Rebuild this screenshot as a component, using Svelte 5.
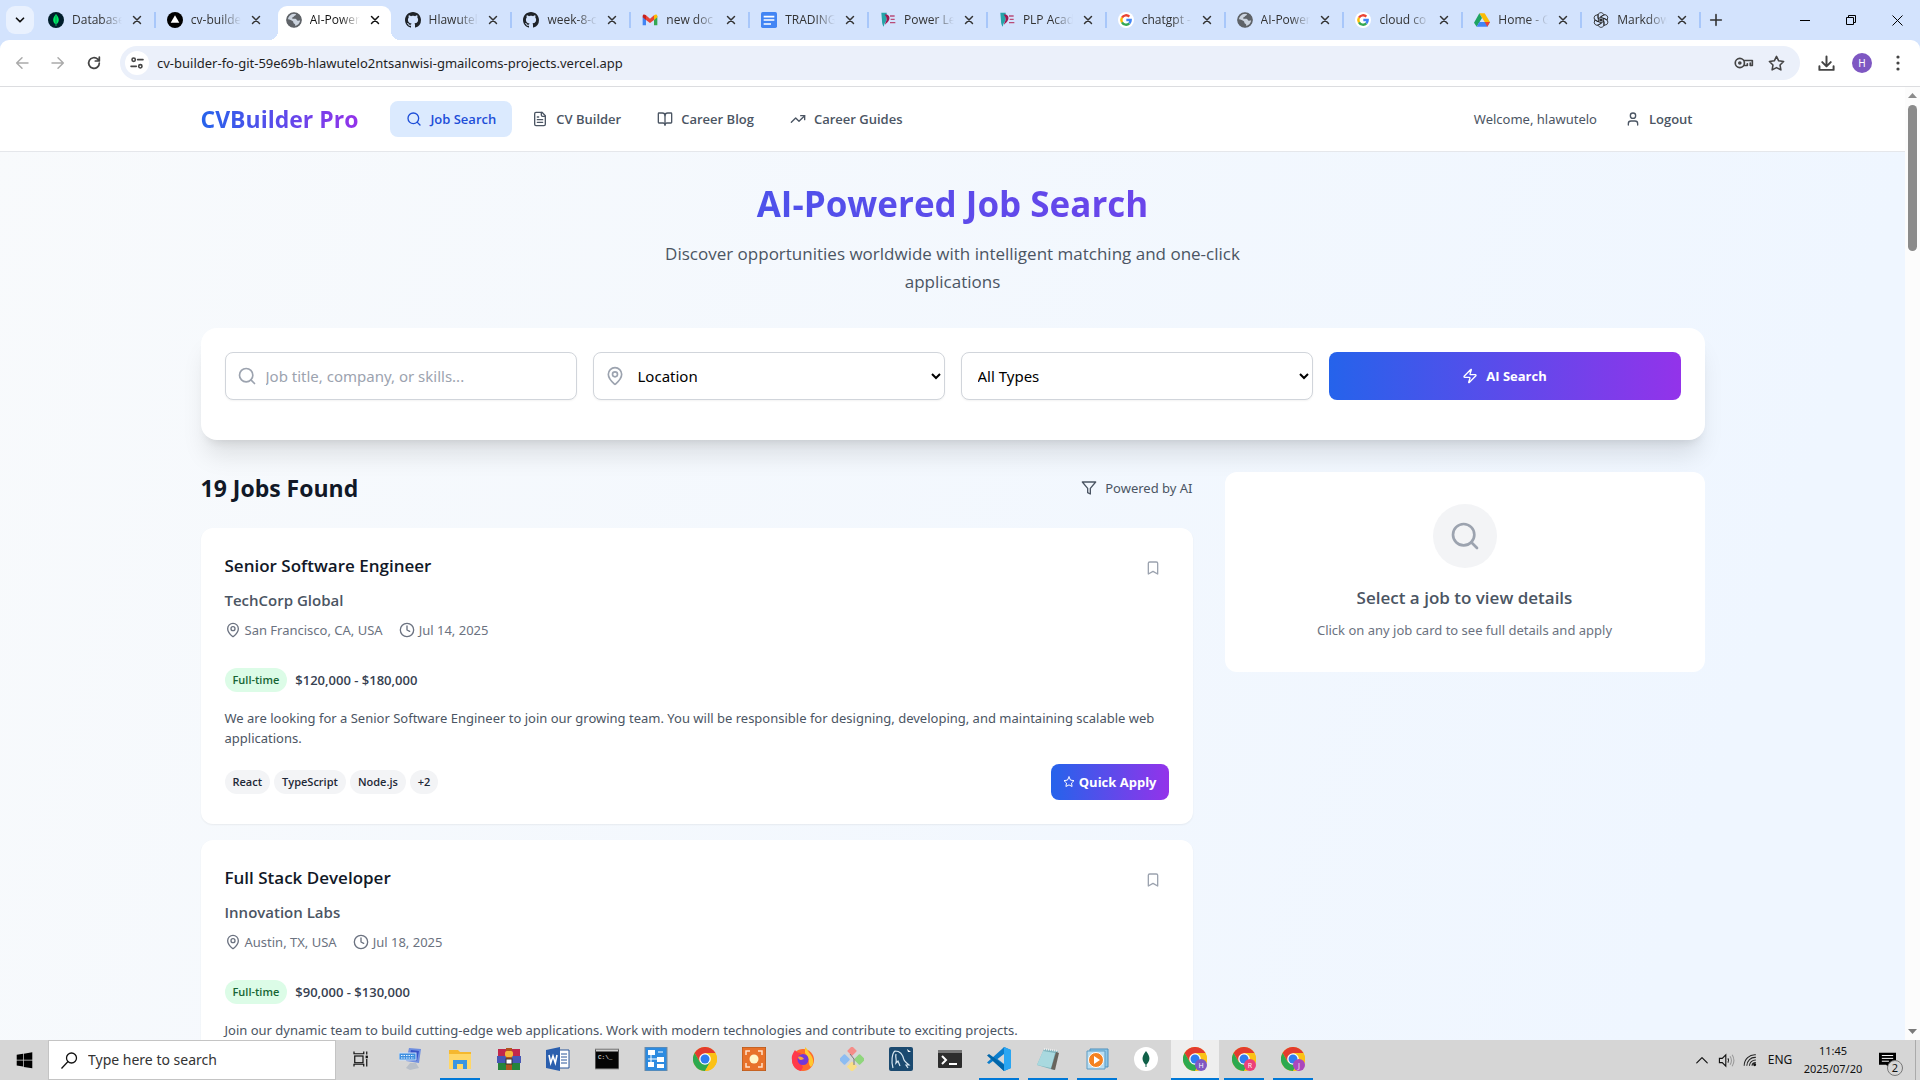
<script>
  const paths = {
    search: '<circle cx="11" cy="11" r="8"/><path d="m21 21-4.3-4.3"/>',
    file: '<path d="M15 2H6a2 2 0 0 0-2 2v16a2 2 0 0 0 2 2h12a2 2 0 0 0 2-2V7Z"/><path d="M14 2v4a2 2 0 0 0 2 2h4"/><path d="M10 9H8"/><path d="M16 13H8"/><path d="M16 17H8"/>',
    book: '<path d="M12 7v14"/><path d="M3 18a1 1 0 0 1-1-1V4a1 1 0 0 1 1-1h5a4 4 0 0 1 4 4 4 4 0 0 1 4-4h5a1 1 0 0 1 1 1v13a1 1 0 0 1-1 1h-6a3 3 0 0 0-3 3 3 3 0 0 0-3-3z"/>',
    trend: '<path d="M22 7 13.5 15.5 8.5 10.5 2 17"/><path d="M16 7h6v6"/>',
    user: '<path d="M19 21v-2a4 4 0 0 0-4-4H9a4 4 0 0 0-4 4v2"/><circle cx="12" cy="7" r="4"/>',
    pin: '<path d="M20 10c0 4.993-5.539 10.193-7.399 11.799a1 1 0 0 1-1.202 0C9.539 20.193 4 14.993 4 10a8 8 0 0 1 16 0"/><circle cx="12" cy="10" r="3"/>',
    clock: '<circle cx="12" cy="12" r="10"/><path d="M12 6v6l4 2"/>',
    zap: '<path d="M4 14a1 1 0 0 1-.78-1.63l9.9-10.2a.5.5 0 0 1 .86.46l-1.92 6.02A1 1 0 0 0 13 10h7a1 1 0 0 1 .78 1.63l-9.9 10.2a.5.5 0 0 1-.86-.46l1.92-6.02A1 1 0 0 0 11 14z"/>',
    filter: '<path d="M22 3H2l8 9.46V19l4 2v-8.54L22 3z"/>',
    bookmark: '<path d="m19 21-7-4-7 4V5a2 2 0 0 1 2-2h10a2 2 0 0 1 2 2v16z"/>',
    star: '<path d="M12 2l3.09 6.26L22 9.27l-5 4.87 1.18 6.88L12 17.77l-6.18 3.25L7 14.14 2 9.27l6.91-1.01L12 2z"/>',
    close: '<path d="M6 6l12 12M18 6 6 18"/>',
    chevron: '<path d="m6 9 6 6 6-6"/>',
    back: '<path d="M21 12H4M12 4l-8 8 8 8"/>',
    forward: '<path d="M3 12h17M12 4l8 8-8 8"/>',
    reload: '<path d="M20 12a8 8 0 1 1-2.5-5.8L20 8.500M20 3v6h-6"/>',
    tune: '<circle cx="7" cy="7" r="2.500"/><path d="M13 7h8M3 17h8"/><circle cx="17" cy="17" r="2.500"/>',
    key: '<circle cx="7" cy="12" r="5.500"/><circle cx="7" cy="12" r="1.200"/><path d="M12 9h10v6h-2.500v-3M12 15h4v-2"/>',
    download: '<path d="M12 2v14M6 10l6 6 6-6M2 16v5h20v-5"/>',
    plus: '<path d="M12 4v16M4 12h16"/>',
    up: '<path d="m3 17 9-9 9 9"/>'
  };

  const chromeArt = '<circle cx="12" cy="12" r="12" fill="#fbc116"/><path d="M1.600 6A12 12 0 0 1 22.400 6H12L6.800 15Z" fill="#e33b2e"/><path d="M1.600 6A12 12 0 0 0 12 24l5.200-9-5.200-3-5.200 3Z" fill="#2da94f"/><path d="M22.400 6H12v6l5.200 3L12 24A12 12 0 0 0 22.400 6Z" fill="#fbc116"/><circle cx="12" cy="12" r="5.800" fill="#fff"/><circle cx="12" cy="12" r="4.500" fill="#2f7cf0"/>';
  const badge = (letter, fill) => `${chromeArt}<circle cx="18" cy="18" r="6" fill="${fill}"/><text x="18" y="20.500" text-anchor="middle" font-size="7" fill="#fff" font-family="Open Sans, sans-serif">${letter}</text>`;

  const github = '<path fill="#1f2328" transform="scale(1.5)" d="M8 0C3.580 0 0 3.580 0 8c0 3.540 2.290 6.530 5.470 7.590.4.070.55-.17.55-.38 0-.19-.01-.82-.01-1.490-2.010.37-2.530-.49-2.690-.94-.09-.23-.48-.94-.82-1.130-.28-.15-.68-.52-.01-.53.63-.01 1.080.58 1.230.82.72 1.210 1.870.87 2.330.66.07-.52.28-.87.51-1.070-1.780-.2-3.640-.89-3.640-3.950 0-.87.31-1.590.82-2.150-.08-.2-.36-1.020.08-2.120 0 0 .67-.21 2.200.82.64-.18 1.320-.27 2-.27s1.360.09 2 .27c1.530-1.040 2.200-.82 2.200-.82.44 1.100.16 1.920.08 2.120.51.56.82 1.270.82 2.150 0 3.070-1.870 3.750-3.650 3.950.29.25.54.73.54 1.480 0 1.070-.01 1.930-.01 2.200 0 .21.15.46.55.38A8.010 8.010 0 0 0 16 8c0-4.420-3.580-8-8-8Z"/>';
  const globe = '<circle cx="12" cy="12" r="11" fill="#5f6368"/><path d="M14 2c2 1 1 3-1 3.500-1 .3-1 1.500-2 2-1.500.6-2 1-1.500 2.500H14c2 0 2 3 4 3s3-1 4.500-.5A11 11 0 0 1 14 22c-1-1 .5-2-.5-3.500-1-1-2.500-1-2.500-3s-2-2.500-4-3.500-4-1.500-5.500-.5C2 7 5 3 9 2c1 1 3-.5 5 0Z" fill="#dfe7f5" opacity=".85"/><circle cx="12" cy="12" r="10.500" fill="none" stroke="#5f6368" stroke-width="2.500"/>';
  const google = '<circle cx="12" cy="12" r="12" fill="#fff"/><g fill="none" stroke-width="3.600"><path d="M6 8.500A7 7 0 0 1 17 7" stroke="#ea4335"/><path d="M6 15.500a7 7 0 0 1 0-7" stroke="#fbbc04"/><path d="M17 17a7 7 0 0 1-11-1.500" stroke="#34a853"/><path d="M12.500 12H19a7 7 0 0 1-2 5" stroke="#4285f4"/></g>';
  const plp = '<path d="M2 1h8v9c0 5-4 6-4 12C4 20 3 17 3 13Z" fill="#25a4a8"/><path d="M7 4c6-1 8 3 7 7s-5 6-6 8c-1-3 2-5 2-8S9 6 7 4Z" fill="#a01850"/><path d="M15 6h7M16 11h6M15 16h8" stroke="#b94c78" stroke-width="2"/>';
  const knot = [0, 60, 120, 180, 240, 300]
    .map((turn) => `<path transform="rotate(${turn} 12 12)" d="M12 7.500 7.500 10V5.500A4.300 4.300 0 0 1 15.500 3l1.500 1-5 3v6"/>`)
    .join('');

  const art = {
    mongo: '<circle cx="12" cy="12" r="12" fill="#001e2b"/><path d="M12 3c6 7 5 12 .5 15.500V21h-1v-2.500C7 15 6 10 12 3Z" fill="#00ed64"/><path d="M12 5v14" stroke="#00684a" stroke-width="1"/>',
    vercel: '<circle cx="12" cy="12" r="12" fill="#000"/><path d="m12 5 6.500 11h-13Z" fill="#fff"/>',
    globe, github, google, plp,
    gmail: '<path d="M1 5v15h5V11L1 7Z" fill="#4285f4"/><path d="M18 11v9h5V6Z" fill="#34a853"/><path d="M18 5v7l5-4V6c0-3-3-3-5-1Z" fill="#fbbc04"/><path d="M6 5v7l6 4.500 6-4.500V5l-6 5Z" fill="#ea4335"/><path d="M1 6v2l5 4V5C4 3 1 3 1 6Z" fill="#c5221f"/>',
    docs: '<rect width="24" height="24" rx="2.500" fill="#4285f4"/><path d="M4 7h16M4 12h16M4 18h11" stroke="#fff" stroke-width="2.500"/>',
    drive: '<path d="M8 2h8l8 13h-8Z" fill="#fbbc04"/><path d="M8 2 0 16l4 6 8-13Z" fill="#1ea362"/><path d="M4 22h16l4-7H8Z" fill="#4285f4"/><path d="m16 15 8 0-4 7Z" fill="#ea4335"/>',
    openai: `<g fill="none" stroke="#222" stroke-width="1.200">${knot}</g>`,
    taskview: '<g fill="none" stroke="#111" stroke-width="1.600"><rect x="5" y="8" width="11" height="9"/><path d="M4 2v3h13V2M4 22v-3h13v3M21 2v4M21 12v10"/></g><rect x="19.500" y="7.500" width="3" height="3.500" fill="#111"/>',
    system: '<path d="m10 1 12 1-2 14-13-2Z" fill="#6f8fe0"/><path d="m12 3 8 1-2 10-8-1Z" fill="#3553c8"/><rect y="6" width="17" height="7" fill="#3d8fe0" stroke="#cfe2f7"/><path d="M2 8.500h13M2 11h13" stroke="#e9f4ff" stroke-dasharray="1.500 1"/><path d="M11 16h6l3 5-9 2-4-2Z" fill="#b8bfc9"/>',
    explorer: '<path d="M1 3h9l2 2h11v17H1Z" fill="#f5b82e"/><path d="M1 7h22v15H1Z" fill="#ffd767"/><path d="M5 22v-9h14v9h-4v-5H9v5Z" fill="#3a95e0"/>',
    winrar: '<path d="M1 2h22v7H1Z" fill="#c2274b"/><path d="M0 9h24v7H0Z" fill="#4657b5"/><path d="M1 16h22v7H1Z" fill="#26843a"/><path d="M9 1h6v22H9Z" fill="#b3541e"/><rect x="8" y="4" width="8" height="6" rx="2" fill="#f4b63a"/><rect x="9" y="12" width="6" height="5" fill="#fff" stroke="#333"/>',
    word: '<path d="M12 3h11v18H12Z" fill="#fff" stroke="#2b579a"/><path d="M15 7h6M15 10h6M15 13h6M15 16h6" stroke="#2b579a"/><path d="m0 3 14-3v24L0 21Z" fill="#2b5fae"/><path d="m3 8 1.700 8L7 9l2.300 7L11 8" fill="none" stroke="#fff" stroke-width="1.600"/>',
    cmd: '<rect y="2" width="24" height="20" fill="#050505" stroke="#999"/><rect x="1" y="2.500" width="22" height="2" fill="#ccc"/><text x="3" y="12" fill="#fff" font-size="6" font-family="Liberation Mono, monospace">C:\\_</text>',
    flow: '<rect x="1" y="0" width="22" height="24" fill="#2d8be0" stroke="#7a8a99"/><g fill="#fff"><rect x="4" y="3" width="7" height="5"/><rect x="4" y="15" width="6" height="5"/><rect x="13" y="10" width="7" height="5"/><rect x="13" y="17" width="7" height="4"/></g><path d="M7 8v7M4 12h9M14 5h5" stroke="#fff"/>',
    chrome: chromeArt,
    capture: '<rect width="24" height="24" fill="#e8722a" stroke="#a4551d"/><circle cx="12" cy="12" r="4.500" fill="#fff6c8"/><path d="M4 8V4h4M16 4h4v4M20 16v4h-4M8 20H4v-4" fill="none" stroke="#ffe1c9" stroke-width="1.500"/>',
    firefox: '<circle cx="12" cy="13" r="11" fill="#ff6a2a"/><path d="M14 0c3 2 3 5 6 8 3 5 3 9 0 12-4-3 0-8-6-14Z" fill="#ffc830"/><path d="M1 13C0 8 3 5 4 3c1 2 3 3 6 3l-3 6 5 8-2 4C5 23 1 19 1 13Z" fill="#ff3a4a"/><circle cx="12" cy="12.500" r="5.500" fill="#7437d8"/><path d="M7 10c2-1 5 0 6 2-2 1-5 2-6-2Z" fill="#ffa436"/>',
    gitbash: '<rect x="8.500" y="0.500" width="7" height="7" rx="1" transform="rotate(45 12 4)" fill="#f58d88"/><rect x="0.500" y="8.500" width="8" height="8" rx="1" transform="rotate(45 4.500 12.500)" fill="#8cbcf2"/><rect x="15.500" y="8.500" width="8" height="8" rx="1" transform="rotate(45 19.500 12.500)" fill="#8fd67c"/><rect x="8" y="16" width="7.500" height="7.500" rx="1" transform="rotate(45 12 20)" fill="#f9df88"/><path d="m10 7 4 5v6" stroke="#777" fill="none"/>',
    mysql: '<rect width="24" height="24" rx="2" fill="#1b4a70"/><path d="M4 21C2 15 3 6 6 4c5 0 8 4 9 9 1 2 3 3 5 5l-3 0 2 3M7 7c-1 4 1 5 0 9l2-2 2 5" fill="none" stroke="#d9e8f2" stroke-width="1.200"/><path d="m18 2 4 3-3 0" fill="#fff"/>',
    terminal: '<rect y="3" width="24" height="18" rx="1" fill="#2d2d2d"/><path d="M0 3h24v3H0Z" fill="#777"/><path d="m4 9 4 4-4 4M11 17h8" fill="none" stroke="#fff" stroke-width="2"/>',
    vscode: '<path d="m17 0 7 3v18l-7 3L6 14l-4 3-2-1.500L15 2Z" fill="#0b7dcc"/><path d="m17 0 7 3v18l-7 3Z" fill="#2aa6f2"/><path d="M0 8.500 2 7l15 11v6L6 14Z" fill="#0065a9"/><path d="m17 7-6.500 5 6.500 5Z" fill="#d6d6d6"/>',
    notepad: '<path d="m8 2 14 2-4 19L1 18Z" fill="#7eb4bd"/><path d="m7 4 12 2-4 15L1 18Z" fill="#a9d9df"/><path d="m20 5 3 1-4 17-4-1Z" fill="#68645c"/><path d="m8 2 14 2" stroke="#eee" stroke-width="2" stroke-dasharray="1 1"/>',
    media: '<path d="M5 2h18v18H5Z" fill="#8cc6e8" stroke="#4f91bd"/><path d="M2 4h18v18H2Z" fill="#b9def2" stroke="#5e9cc3"/><circle cx="11" cy="13" r="7.500" fill="#f58220" stroke="#fff"/><path d="m9 9 6 4-6 4Z" fill="#fff"/>',
    compass: '<circle cx="12" cy="12" r="12" fill="#fff"/><path d="M12 4c5 6 4 10 .5 13.500V20h-1v-2.500C8 14 7 10 12 4Z" fill="#116149"/>',
    chromeH: badge('H', '#7e57c2'),
    chromeR: badge('R', '#ec407a'),
    chromeJ: badge('J', '#ab47bc'),
    windows: '<path d="m1 4 9-1.500V11H1ZM11 2.300 23 .5V11H11ZM1 12h9v8.500L1 19.200ZM11 12h12v11l-12-1.800Z" fill="#000"/>',
    volume: '<path d="M2 9h4l5-5v16l-5-5H2Z" fill="none" stroke="#111" stroke-width="1.600"/><path d="M14 9q2 3 0 6" fill="none" stroke="#111" stroke-width="1.500"/><path d="M17 6q4 6 0 12M20 4q5 8 0 16" fill="none" stroke="#999" stroke-width="1.500"/>',
    wifi: '<g fill="none" stroke="#222" stroke-width="1.800"><path d="M2 22C2 11 11 2 22 3"/><path d="M6.500 22C7 13 13 7 22 7.500"/><path d="M11 22c0-6 5-10 11-10"/><path d="M15.500 22c0-4 3-5.500 6.500-5.500"/></g><circle cx="20" cy="20" r="2.500" fill="#111"/>',
    note: '<path d="M0 1h24v17h-8v6l-6-6H0Z" fill="#000"/><path d="M4 5h16M4 9h16M4 13h10" stroke="#fff" stroke-width="1.400"/>'
  };

  const tabs = [
    ['mongo', 'Database'], ['vercel', 'cv-builde'], ['globe', 'AI-Power'], ['github', 'Hlawutel'],
    ['github', 'week-8-c'], ['gmail', 'new doc'], ['docs', 'TRADING'], ['plp', 'Power Le'],
    ['plp', 'PLP Acad'], ['google', 'chatgpt -'], ['globe', 'AI-Power'], ['google', 'cloud co'],
    ['drive', 'Home - G'], ['openai', 'Markdow']
  ];
  const activeTab = 2;

  const nav = [
    ['search', 'Job Search'], ['file', 'CV Builder'], ['book', 'Career Blog'], ['trend', 'Career Guides']
  ];

  const jobs = [
    {
      title: 'Senior Software Engineer', company: 'TechCorp Global', place: 'San Francisco, CA, USA', date: 'Jul 14, 2025',
      type: 'Full-time', salary: '$120,000 - $180,000',
      text: 'We are looking for a Senior Software Engineer to join our growing team. You will be responsible for designing, developing, and maintaining scalable web applications.',
      tags: ['React', 'TypeScript', 'Node.js', '+2']
    },
    {
      title: 'Full Stack Developer', company: 'Innovation Labs', place: 'Austin, TX, USA', date: 'Jul 18, 2025',
      type: 'Full-time', salary: '$90,000 - $130,000',
      text: 'Join our dynamic team to build cutting-edge web applications. Work with modern technologies and contribute to exciting projects.',
      tags: []
    }
  ];

  const apps = [
    ['taskview', ''], ['system', ''], ['explorer', 'open'], ['winrar', ''], ['word', ''], ['cmd', ''], ['flow', ''],
    ['chrome', ''], ['capture', ''], ['firefox', ''], ['gitbash', ''], ['mysql', ''], ['terminal', ''],
    ['vscode', 'open'], ['notepad', 'open'], ['media', 'open'], ['compass', ''], ['chromeH', 'open current'],
    ['chromeR', 'open'], ['chromeJ', 'open']
  ];
</script>

{#snippet icon(name, size, weight = 2)}
  <svg width={size} height={size} viewBox="0 0 24 24" fill="none" stroke="currentColor" stroke-width={weight} stroke-linecap="round" stroke-linejoin="round" aria-hidden="true">{@html paths[name]}</svg>
{/snippet}

{#snippet picture(name, size)}
  <svg width={size} height={size} viewBox="0 0 24 24" aria-hidden="true">{@html art[name]}</svg>
{/snippet}

<div class="screen">
  <div class="tabstrip">
    <button class="tabsearch" aria-label="Search tabs">{@render icon('chevron', 14, 3)}</button>
    <div class="tabs">
      {#each tabs as [kind, label], i}
        <div class="tab" class:active={i === activeTab} class:divided={i !== activeTab && i !== activeTab - 1}>
          {@render picture(kind, 16)}
          <span class="tabname">{label}</span>
          <button aria-label="Close tab">{@render icon('close', 14, 2.5)}</button>
        </div>
      {/each}
    </div>
    <button class="newtab" aria-label="New tab">{@render icon('plus', 16, 2.4)}</button>
    <div class="winbuttons">
      <button aria-label="Minimize"><svg width="10" height="10" viewBox="0 0 10 10"><path d="M0 5.500h10" stroke="#000" /></svg></button>
      <button aria-label="Restore"><svg width="10" height="10" viewBox="0 0 10 10" fill="none" stroke="#000"><path d="M.5 2.500h7v7h-7zM2.500 2V.5h7v7H8" /></svg></button>
      <button aria-label="Close"><svg width="11" height="11" viewBox="0 0 11 11"><path d="m.5.5 10 10m0-10-10 10" stroke="#000" /></svg></button>
    </div>
  </div>

  <div class="toolbar">
    <div class="history">
      <button class="dim" aria-label="Back">{@render icon('back', 16, 2.2)}</button>
      <button class="dim" aria-label="Forward">{@render icon('forward', 16, 2.2)}</button>
      <button aria-label="Reload">{@render icon('reload', 16, 2.6)}</button>
    </div>
    <div class="omnibox">
      <button class="site" aria-label="Site information">{@render icon('tune', 16, 2.4)}</button>
      <input aria-label="Address" value="cv-builder-fo-git-59e69b-hlawutelo2ntsanwisi-gmailcoms-projects.vercel.app" />
      <button aria-label="Passwords">{@render icon('key', 20, 2)}</button>
      <button aria-label="Bookmark page">{@render icon('star', 17, 2.2)}</button>
    </div>
    <div class="tools">
      <button aria-label="Downloads">{@render icon('download', 17, 2.8)}</button>
      <button aria-label="Profile"><span class="avatar">H</span></button>
      <button aria-label="Menu"><svg width="4" height="16" viewBox="0 0 4 16" fill="#444"><circle cx="2" cy="2" r="1.600" /><circle cx="2" cy="8" r="1.600" /><circle cx="2" cy="14" r="1.600" /></svg></button>
    </div>
  </div>

  <div class="viewport">
    <div class="page">
      <header>
        <div class="wrap headrow">
          <a class="logo" href="#home">CVBuilder Pro</a>
          <nav>
            {#each nav as [glyph, label], i}
              <a href="#{glyph}" class:selected={i === 0}>{@render icon(glyph, 16)}{label}</a>
            {/each}
          </nav>
          <div class="account">
            <span>Welcome, hlawutelo</span>
            <button>{@render icon('user', 16)}Logout</button>
          </div>
        </div>
      </header>

      <main class="wrap">
        <div class="hero">
          <h1>AI-Powered Job Search</h1>
          <p>Discover opportunities worldwide with intelligent matching and one-click applications</p>
        </div>

        <form class="searchcard">
          <label class="field">
            <span class="lead">{@render icon('search', 20)}</span>
            <input type="text" aria-label="Keywords" placeholder="Job title, company, or skills..." />
          </label>
          <label class="field">
            <span class="lead">{@render icon('pin', 20)}</span>
            <select aria-label="Location"><option>Location</option></select>
          </label>
          <label class="field">
            <select class="plain" aria-label="Job type"><option>All Types</option></select>
          </label>
          <button type="button" class="gradient go">{@render icon('zap', 16)}AI Search</button>
        </form>

        <div class="columns">
          <section class="results">
            <div class="resulthead">
              <h2>19 Jobs Found</h2>
              <span>{@render icon('filter', 16)}Powered by AI</span>
            </div>
            {#each jobs as job}
              <article class="job">
                <div class="jobtop">
                  <div>
                    <h3>{job.title}</h3>
                    <p class="company">{job.company}</p>
                    <div class="meta">
                      <span>{@render icon('pin', 16)}{job.place}</span>
                      <span>{@render icon('clock', 16)}{job.date}</span>
                    </div>
                  </div>
                  <button class="save" aria-label="Save job">{@render icon('bookmark', 16)}</button>
                </div>
                <div class="pay"><span class="type">{job.type}</span><span>{job.salary}</span></div>
                <p class="about">{job.text}</p>
                <div class="jobfoot">
                  <div class="tags">{#each job.tags as tag}<span>{tag}</span>{/each}</div>
                  <button class="gradient apply">{@render icon('star', 12)}Quick Apply</button>
                </div>
              </article>
            {/each}
          </section>

          <aside class="details">
            <div class="disc">{@render icon('search', 32)}</div>
            <h3>Select a job to view details</h3>
            <p>Click on any job card to see full details and apply</p>
          </aside>
        </div>
      </main>
    </div>
    <div class="scrollbar" aria-hidden="true">
      <svg width="9" height="5" viewBox="0 0 9 5"><path d="M4.500 0 9 5H0Z" fill="#8b8b8b" /></svg>
      <div class="track"><div class="thumb"></div></div>
      <svg width="9" height="5" viewBox="0 0 9 5"><path d="M4.500 5 9 0H0Z" fill="#7a7a7a" /></svg>
    </div>
  </div>

  <div class="taskbar">
    <button class="start" aria-label="Start">{@render picture('windows', 17)}</button>
    <label class="finder">
      <svg width="17" height="17" viewBox="0 0 17 17" fill="none" stroke="#111" stroke-width="1.300" aria-hidden="true"><circle cx="10.500" cy="6" r="5" /><path d="M7 9.500.5 16.500" /></svg>
      <input type="text" aria-label="Search" placeholder="Type here to search" />
    </label>
    <div class="apps">
      {#each apps as [name, status]}
        <button class={status} aria-label={name}>{@render picture(name, name === 'taskview' ? 18 : 24)}</button>
      {/each}
    </div>
    <div class="tray">
      <button aria-label="Show hidden icons">{@render icon('up', 14, 2)}</button>
      <button aria-label="Volume">{@render picture('volume', 17)}</button>
      <button aria-label="Network">{@render picture('wifi', 14)}</button>
      <span class="lang">ENG</span>
      <div class="clock"><span>11:45</span><span>2025/07/20</span></div>
      <button class="notes" aria-label="Notifications">{@render picture('note', 17)}<span class="count">2</span></button>
    </div>
  </div>
</div>

<style>
  :global(body) {
    margin: 0;
    overflow: hidden;
  }
  .screen,
  .screen :global(*) {
    box-sizing: border-box;
  }
  .screen {
    display: flex;
    flex-direction: column;
    height: 100vh;
    font-family: 'Noto Sans', 'Open Sans', sans-serif;
    font-size: 13px;
    line-height: 20px;
    color: #4b5563;
    background: #d3e3fd;
    overflow: hidden;
  }
  button,
  input,
  select {
    font: inherit;
    color: inherit;
    border: 0;
    background: none;
    padding: 0;
    margin: 0;
    outline: 0;
  }
  button {
    display: flex;
    align-items: center;
    justify-content: center;
  }
  svg {
    display: block;
    flex: none;
  }
  h1, h2, h3, p {
    margin: 0;
  }
  a {
    text-decoration: none;
    color: inherit;
  }
  h1, h2, h3, nav, .logo, .company, .account button, .pay, .tags, .gradient, .hero p, .tabs {
    font-family: 'Open Sans', 'Noto Sans', sans-serif;
  }

  .tabstrip {
    display: flex;
    flex: none;
    height: 40px;
    padding-left: 6px;
    color: #333;
  }
  .tabsearch {
    width: 28px;
    height: 28px;
    margin-top: 6px;
    border-radius: 9px;
    background: #e9f1fe;
    color: #111;
  }
  .tabs {
    display: flex;
    flex: 0 1 1664px;
    min-width: 0;
    margin-left: 3px;
  }
  .tab {
    position: relative;
    display: flex;
    align-items: center;
    flex: 1 1 0;
    min-width: 0;
    gap: 8px;
    padding: 0 12px 0 11px;
    font-size: 12px;
  }
  .tab.divided::after {
    content: '';
    position: absolute;
    right: 0;
    top: 12px;
    width: 2px;
    height: 16px;
    background: #a8c7fa;
  }
  .tabname {
    flex: 1;
    min-width: 0;
    overflow: hidden;
    white-space: nowrap;
    mask-image: linear-gradient(90deg, #000 60%, transparent);
  }
  .tab.active {
    z-index: 0;
    color: #111;
  }
  .tab.active::before {
    content: '';
    position: absolute;
    z-index: -1;
    inset: 6px 3px 0;
    border-radius: 9px 9px 0 0;
    background: #fff;
  }
  .tab.active::after {
    content: '';
    position: absolute;
    z-index: -1;
    inset: auto -6px 0;
    height: 9px;
    background:
      radial-gradient(circle at 0 0, transparent 9px, #fff 9px) left / 9px 9px no-repeat,
      radial-gradient(circle at 100% 0, transparent 9px, #fff 9px) right / 9px 9px no-repeat;
  }
  .newtab {
    width: 30px;
  }
  .winbuttons {
    display: flex;
    margin-left: auto;
  }
  .winbuttons button {
    width: 46px;
  }

  .toolbar {
    display: flex;
    align-items: center;
    flex: none;
    height: 47px;
    padding: 0 4px;
    border-bottom: 1px solid #dcdde0;
    border-radius: 9px 9px 0 0;
    background: #fff;
    color: #444;
  }
  .history {
    display: flex;
  }
  .history button {
    width: 36px;
    height: 34px;
  }
  .history .dim {
    color: #aaa;
  }
  .omnibox {
    display: flex;
    align-items: center;
    flex: 1;
    height: 34px;
    margin-left: 8px;
    padding: 0 8px 0 5px;
    border-radius: 17px;
    background: #ebf0fa;
  }
  .omnibox button {
    width: 32px;
  }
  .omnibox .site {
    width: 24px;
    height: 24px;
    border-radius: 50%;
    background: #fff;
  }
  .omnibox input {
    flex: 1;
    min-width: 0;
    margin-left: 8px;
    color: #1f1f1f;
  }
  .tools {
    display: flex;
    margin-left: 8px;
  }
  .tools button {
    width: 36px;
  }
  .avatar {
    width: 20px;
    height: 20px;
    border-radius: 50%;
    background: #7e57c2;
    color: #fff;
    font-size: 10px;
  }

  .viewport {
    display: flex;
    flex: 1;
    min-height: 0;
  }
  .page {
    flex: 1;
    min-width: 0;
    overflow: hidden;
    background: linear-gradient(107deg, #f8fafc, #eff6ff 88%);
  }
  .scrollbar {
    display: flex;
    flex-direction: column;
    align-items: center;
    width: 15px;
    padding: 6px 0;
    background: #fcfcfc;
  }
  .track {
    flex: 1;
    padding-top: 7px;
  }
  .thumb {
    width: 9px;
    height: 146px;
    border-radius: 5px;
    background: #8b8b8b;
  }
  .wrap {
    max-width: 1536px;
    margin: 0 auto;
    padding: 0 16px;
  }
  header {
    background: #fff;
    border-bottom: 1px solid #e5e7eb;
  }
  .headrow {
    display: flex;
    align-items: center;
    height: 64px;
  }
  .logo {
    font-size: 23px;
    line-height: 32px;
    font-weight: 700;
    background: linear-gradient(90deg, #2563eb, #9333ea);
    background-clip: text;
    color: transparent;
  }
  nav {
    display: flex;
    gap: 4px;
    margin-left: 32px;
    font-weight: 600;
  }
  nav a {
    display: flex;
    align-items: center;
    gap: 8px;
    height: 36px;
    padding: 0 16px;
    border-radius: 8px;
  }
  nav .selected {
    background: #dbeafe;
    color: #1d4ed8;
  }
  .account {
    display: flex;
    align-items: center;
    gap: 16px;
    margin-left: auto;
  }
  .account button {
    gap: 8px;
    height: 36px;
    padding: 0 12px;
    font-family: 'Open Sans', 'Noto Sans', sans-serif;
    font-weight: 600;
  }
  main.wrap {
    padding-top: 32px;
  }
  .hero {
    text-align: center;
  }
  h1 {
    font-size: 35px;
    line-height: 40px;
    font-weight: 700;
    background: linear-gradient(90deg, #2563eb, #9333ea);
    background-clip: text;
    color: transparent;
  }
  .hero p {
    max-width: 672px;
    margin: 16px auto 0;
    font-size: 17px;
    line-height: 28px;
  }
  .searchcard {
    display: grid;
    grid-template-columns: repeat(4, 1fr);
    gap: 16px;
    margin-top: 32px;
    padding: 24px 24px 40px;
    border-radius: 16px;
    background: #fff;
    box-shadow: 0 20px 25px -5px rgb(0 0 0 / 10%), 0 8px 10px -6px rgb(0 0 0 / 10%);
  }
  .field {
    position: relative;
    display: block;
    height: 48px;
    color: #000;
    font-size: 15px;
  }
  .field input,
  .field select {
    width: 100%;
    height: 48px;
    padding: 0 0 0 40px;
    border: 1px solid #d1d5db;
    border-radius: 8px;
    background: #fff;
    box-shadow: 0 1px 2px rgb(0 0 0 / 5%);
  }
  .field .plain {
    padding-left: 12px;
  }
  .field input::placeholder {
    color: #9ca3af;
  }
  .lead {
    position: absolute;
    left: 12px;
    top: 14px;
    color: #9ca3af;
  }
  .gradient {
    gap: 8px;
    border-radius: 8px;
    background: linear-gradient(90deg, #2563eb, #9333ea);
    color: #fff;
    font-family: 'Open Sans', 'Noto Sans', sans-serif;
    font-weight: 700;
  }
  .columns {
    display: grid;
    grid-template-columns: repeat(3, 1fr);
    align-items: start;
    gap: 32px;
    margin-top: 32px;
  }
  .results {
    grid-column: span 2;
    display: flex;
    flex-direction: column;
    gap: 16px;
  }
  .resulthead {
    display: flex;
    align-items: center;
    justify-content: space-between;
    margin-bottom: 8px;
  }
  .resulthead span {
    display: flex;
    align-items: center;
    gap: 8px;
  }
  h2 {
    font-size: 23px;
    line-height: 32px;
    font-weight: 700;
    color: #111827;
  }
  .job {
    padding: 24px;
    border-radius: 12px;
    background: #fff;
    box-shadow: 0 1px 2px rgb(0 0 0 / 6%);
  }
  .jobtop {
    display: flex;
    justify-content: space-between;
    align-items: flex-start;
  }
  h3 {
    font-size: 17px;
    line-height: 28px;
    font-weight: 600;
    color: #111827;
  }
  .company {
    margin-top: 8px;
    font-size: 15px;
    line-height: 24px;
    font-weight: 600;
  }
  .meta {
    display: flex;
    gap: 16px;
    margin-top: 8px;
    color: #6b7280;
  }
  .meta span {
    display: flex;
    align-items: center;
    gap: 4px;
  }
  .save {
    width: 32px;
    height: 32px;
    color: #9ca3af;
  }
  .pay {
    display: flex;
    align-items: center;
    gap: 8px;
    margin-top: 28px;
    color: #374151;
    font-weight: 600;
  }
  .type,
  .tags span {
    padding: 0 8px;
    border-radius: 12px;
    font-size: 11px;
    line-height: 24px;
    font-weight: 600;
  }
  .type {
    background: #dcfce7;
    color: #166534;
  }
  .about {
    margin-top: 16px;
  }
  .jobfoot {
    display: flex;
    align-items: center;
    justify-content: space-between;
    margin-top: 16px;
  }
  .tags {
    display: flex;
    gap: 4px;
  }
  .tags span {
    background: #f3f4f6;
    color: #1f2937;
  }
  .apply {
    gap: 4px;
    height: 36px;
    padding: 0 12px;
  }
  .details {
    display: flex;
    flex-direction: column;
    align-items: center;
    padding: 32px;
    border-radius: 12px;
    background: #fff;
    text-align: center;
  }
  .disc {
    display: grid;
    place-items: center;
    width: 64px;
    height: 64px;
    border-radius: 50%;
    background: #f3f4f6;
    color: #9ca3af;
  }
  .details h3 {
    margin-top: 16px;
    color: #4b5563;
  }
  .details p {
    margin-top: 8px;
    color: #6b7280;
  }

  .taskbar {
    display: flex;
    flex: none;
    height: 40px;
    background: #d6d6d6;
    color: #111;
  }
  .start {
    width: 48px;
  }
  .finder {
    display: flex;
    align-items: center;
    gap: 10px;
    width: 288px;
    padding-left: 12px;
    border: 1px solid #c4c4c4;
    background: #fff;
    font-size: 14px;
  }
  .finder input {
    flex: 1;
    min-width: 0;
  }
  .finder input::placeholder {
    color: #333;
  }
  .apps {
    display: flex;
    gap: 1px;
  }
  .apps button {
    width: 48px;
    height: 40px;
    border-bottom: 2px solid transparent;
  }
  .apps button:first-child {
    margin-right: 2px;
  }
  .apps .open {
    background: linear-gradient(#0078d7, #0078d7) center bottom / 40px 2px no-repeat border-box;
  }
  .apps .current {
    background-color: #eee;
    background-size: 48px 2px;
  }
  .tray {
    display: flex;
    align-items: center;
    margin-left: auto;
    padding-right: 4px;
  }
  .tray button {
    width: 24px;
    height: 40px;
  }
  .lang {
    width: 36px;
    text-align: center;
    font-size: 12px;
  }
  .clock {
    display: flex;
    flex-direction: column;
    width: 70px;
    text-align: center;
    font-size: 11px;
    line-height: 18px;
  }
  .tray .notes {
    position: relative;
    width: 48px;
    padding-right: 8px;
    border-right: 1px solid #aaa;
  }
  .count {
    position: absolute;
    right: 12px;
    bottom: 4px;
    width: 16px;
    height: 16px;
    border: 1px solid #777;
    border-radius: 50%;
    background: #d6d6d6;
    font-size: 11px;
    line-height: 14px;
  }
</style>
